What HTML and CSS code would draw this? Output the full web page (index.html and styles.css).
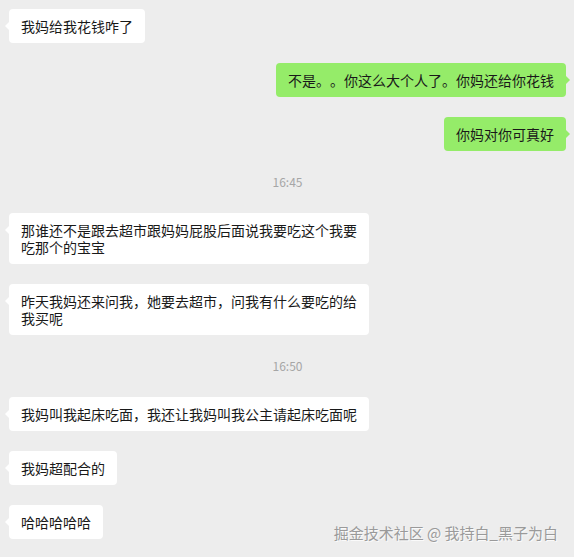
FILE: index.html
```html
<!DOCTYPE html>
<html lang="zh-CN">

<head>
    <meta charset="UTF-8">
    <meta name="viewport" content="width=device-width, initial-scale=1.0">
    <title>聊天记录</title>
    <link rel="stylesheet" href="styles.css">
</head>

<body>

    <div class="chat">
        <div class="msg left">
            <div class="bubble">我妈给我花钱咋了</div>
        </div>
        <div class="msg right">
            <div class="bubble">不是。。你这么大个人了。你妈还给你花钱</div>
        </div>
        <div class="msg right">
            <div class="bubble">你妈对你可真好</div>
        </div>

        <div class="time">16:45</div>

        <div class="msg left">
            <div class="bubble">那谁还不是跟去超市跟妈妈屁股后面说我要吃这个我要吃那个的宝宝</div>
        </div>
        <div class="msg left">
            <div class="bubble">昨天我妈还来问我，她要去超市，问我有什么要吃的给我买呢</div>
        </div>

        <div class="time">16:50</div>

        <div class="msg left">
            <div class="bubble">我妈叫我起床吃面，我还让我妈叫我公主请起床吃面呢</div>
        </div>
        <div class="msg left">
            <div class="bubble">我妈超配合的</div>
        </div>
        <div class="msg left">
            <div class="bubble">哈哈哈哈哈</div>
        </div>
    </div>

    <div class="watermark">掘金技术社区 @ 我持白_黑子为白</div>

</body>

</html>
```

FILE: styles.css
```css
* {
    padding: 0;
    margin: 0;
    box-sizing: border-box;
}

body {
    background-color: #ededed;
    font-family: "Noto Sans CJK SC", "Noto Sans", sans-serif;
    color: #191919;
    height: 100vh;
    overflow: hidden;
    position: relative;
    text-spacing-trim: space-all;
}

.chat {
    display: flex;
    flex-direction: column;
    gap: 20px;
    padding: 9px 8px 0 9px;
}

.msg {
    display: flex;
}

.msg.right {
    justify-content: flex-end;
}

.bubble {
    position: relative;
    max-width: 360px;
    padding: 8.5px 12px;
    font-size: 14px;
    line-height: 17px;
    background-color: #fff;
    border-radius: 4px;
}

.bubble::before {
    content: "";
    position: absolute;
    top: 12px;
    border: 5px solid transparent;
}

.left .bubble::before {
    left: -9px;
    border-right-color: #fff;
}

.right .bubble {
    background-color: #95ec69;
}

.right .bubble::before {
    right: -9px;
    border-left-color: #95ec69;
}

.time {
    text-align: center;
    font-size: 12px;
    line-height: 18px;
    padding: 2px 0;
    color: #a6a6a6;
}

.watermark {
    position: absolute;
    right: 16px;
    bottom: 14px;
    font-size: 15px;
    color: #9a9a9a;
    text-shadow: 1px 1px 0 #fafafa;
}
```
